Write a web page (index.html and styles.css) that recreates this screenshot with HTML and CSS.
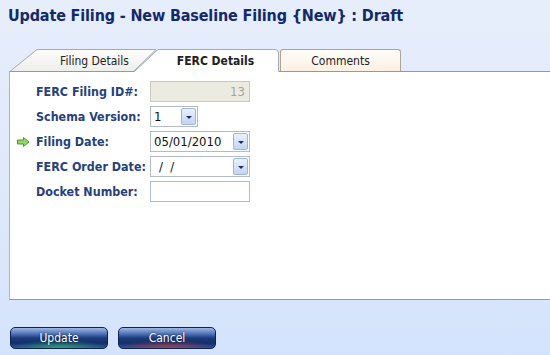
FILE: index.html
```html
<!DOCTYPE html>
<html lang="en">
<head>
    <meta charset="UTF-8">
    <title>Update Filing</title>
    <link rel="stylesheet" href="styles.css">
</head>
<body>
    <h1 class="title">Update Filing - New Baseline Filing {New} : Draft</h1>

    <div class="tabs">
        <div class="tab tab-first">
            <svg class="tab-shape" width="147" height="23" viewBox="0 0 147 23">
                <defs>
                    <linearGradient id="tabFill" x1="0" y1="0" x2="0" y2="1">
                        <stop offset="0" stop-color="#fdfdfb"/>
                        <stop offset="1" stop-color="#eeefec"/>
                    </linearGradient>
                </defs>
                <polygon points="0,22 27,0.5 146,0.5 124,22" fill="url(#tabFill)"/>
                <polyline points="0.5,22 27,0.5 146,0.5 124,22" fill="none" stroke="#a2a9b2"/>
            </svg>
            <span>Filing Details</span>
        </div>
        <div class="tab tab-active">
            <svg class="tab-shape" width="145" height="23" viewBox="0 0 145 23">
                <path d="M0,23 L24,0.5 L141,0.5 Q144.5,0.5 144.5,4 L144.5,23 Z" fill="#ffffff"/>
                <path d="M0.5,22.5 L24,0.5 L141,0.5 Q144.5,0.5 144.5,4 L144.5,22" fill="none" stroke="#a2a9b2"/>
            </svg>
            <span>FERC Details</span>
        </div>
        <div class="tab tab-last">
            <span>Comments</span>
        </div>
    </div>

    <div class="panel">
        <div class="form">
            <span class="mark"></span>
            <label class="label">FERC Filing ID#:</label>
            <div class="field"><input class="input input-disabled" value="13" disabled></div>

            <span class="mark"></span>
            <label class="label">Schema Version:</label>
            <div class="field combo combo-small">
                <span class="combo-text">1</span>
                <span class="drop"><i></i></span>
            </div>

            <span class="mark">
                <svg width="13" height="10" viewBox="0 0 13 10">
                    <path d="M0.5,3 L6.5,3 L6.5,0.5 L12,5 L6.5,9.5 L6.5,7 L0.5,7 Z" fill="#93d464" stroke="#4e9a2c" stroke-linejoin="round"/>
                </svg>
            </span>
            <label class="label">Filing Date:</label>
            <div class="field combo">
                <span class="combo-text">05/01/2010</span>
                <span class="drop"><i></i></span>
            </div>

            <span class="mark"></span>
            <label class="label">FERC Order Date:</label>
            <div class="field combo">
                <span class="combo-text combo-empty">/&nbsp;&nbsp;/</span>
                <span class="drop"><i></i></span>
            </div>

            <span class="mark"></span>
            <label class="label">Docket Number:</label>
            <div class="field"><input class="input" value=""></div>
        </div>
    </div>

    <div class="actions">
        <button class="btn btn-update">Update</button>
        <button class="btn btn-cancel">Cancel</button>
    </div>
</body>
</html>
```

FILE: styles.css
```css
body {
    margin: 0;
    height: 355px;
    overflow: hidden;
    font-family: "DejaVu Sans Condensed", "DejaVu Sans", sans-serif;
    font-stretch: condensed;
    background: linear-gradient(to bottom, #e7eefb 0%, #dfe9fb 50%, #d4e3fd 100%);
    color: #222222;
}

.title {
    box-sizing: border-box;
    height: 49px;
    margin: 0;
    padding: 6px 0 0 8px;
    font-size: 16px;
    font-weight: bold;
    line-height: 20px;
    letter-spacing: -0.15px;
    color: #13296a;
}

/* tab strip */
.tabs {
    position: relative;
    z-index: 1;
    display: flex;
    height: 23px;
    margin-bottom: -1px;
    padding-left: 10px;
    font-size: 12px;
}

.tab {
    position: relative;
    height: 23px;
    line-height: 25px;
    text-align: center;
}

.tab span {
    position: relative;
}

.tab-shape {
    position: absolute;
    left: 0;
    top: 0;
}

.tab-first {
    width: 147px;
}

.tab-first span {
    left: 11px;
}

.tab-active {
    width: 145px;
    margin-left: -23px;
    font-weight: bold;
}

.tab-active span {
    left: 9px;
}

.tab-last {
    box-sizing: border-box;
    width: 121px;
    height: 22px;
    line-height: 23px;
    margin-left: 1px;
    border: 1px solid #aca596;
    border-bottom: none;
    border-radius: 3px 3px 0 0;
    background: linear-gradient(to bottom, #fffdfa, #fcf0e3);
}

/* content panel */
.panel {
    box-sizing: border-box;
    height: 229px;
    margin-left: 9px;
    border: 1px solid #8c9ab0;
    border-right: none;
    border-left-color: #a9b6c9;
    background: #ffffff;
}

.form {
    display: grid;
    grid-template-columns: 26px 114px 100px;
    grid-auto-rows: 21px;
    row-gap: 4px;
    padding-top: 9px;
}

.mark {
    display: flex;
    align-items: center;
    padding-left: 7px;
}

.label {
    font-size: 12.4px;
    font-weight: bold;
    line-height: 22px;
    color: #273f7c;
}

.field {
    position: relative;
    box-sizing: border-box;
    height: 21px;
}

.input {
    box-sizing: border-box;
    width: 100px;
    height: 21px;
    margin: 0;
    padding: 0 4px;
    border: 1px solid #b3bcc6;
    background: #ffffff;
    font-family: inherit;
    font-size: 13px;
    color: #111111;
    outline: none;
}

.input-disabled {
    background: #ecebdf;
    border-color: #c6c8c4;
    color: #a4a4a4;
    text-align: right;
}

.combo {
    width: 100px;
    border: 1px solid #b3bcc6;
    background: #ffffff;
}

.combo-small {
    width: 48px;
}

.combo-text {
    display: block;
    padding-left: 3px;
    font-size: 13px;
    line-height: 19px;
    color: #111111;
}

.combo-empty {
    padding-left: 8px;
}

.drop {
    position: absolute;
    top: 1px;
    right: 1px;
    box-sizing: border-box;
    width: 15px;
    height: 17px;
    border: 1px solid #9db5df;
    border-radius: 2px;
    background: linear-gradient(to bottom, #eaf1fd, #c2d5f5);
}

.drop i {
    position: absolute;
    left: 4px;
    top: 7px;
    width: 0;
    height: 0;
    border-left: 3px solid transparent;
    border-right: 3px solid transparent;
    border-top: 3px solid #1d2f66;
}

/* bottom buttons */
.actions {
    display: flex;
    gap: 10px;
    margin-top: 27px;
    padding-left: 10px;
}

.btn {
    width: 98px;
    height: 22px;
    padding: 0 0 1px;
    border: 1px solid #0d2452;
    border-radius: 5px;
    font-family: inherit;
    font-size: 12px;
    color: #ffffff;
    text-shadow: 0 0 2px #0a1c44;
    cursor: pointer;
}

.btn-update {
    background:
        radial-gradient(ellipse 48px 8px at 50% 100%, rgba(50, 190, 100, 0.75), rgba(50, 190, 100, 0) 100%),
        linear-gradient(to bottom, #9fb8e4 0%, #4e71b6 30%, #1c3b7c 50%, #152f68 75%, #2b52a0 100%);
}

.btn-cancel {
    background:
        radial-gradient(ellipse 48px 8px at 50% 100%, rgba(200, 60, 60, 0.75), rgba(200, 60, 60, 0) 100%),
        linear-gradient(to bottom, #9fb8e4 0%, #4e71b6 30%, #1c3b7c 50%, #152f68 75%, #2b52a0 100%);
}
```
